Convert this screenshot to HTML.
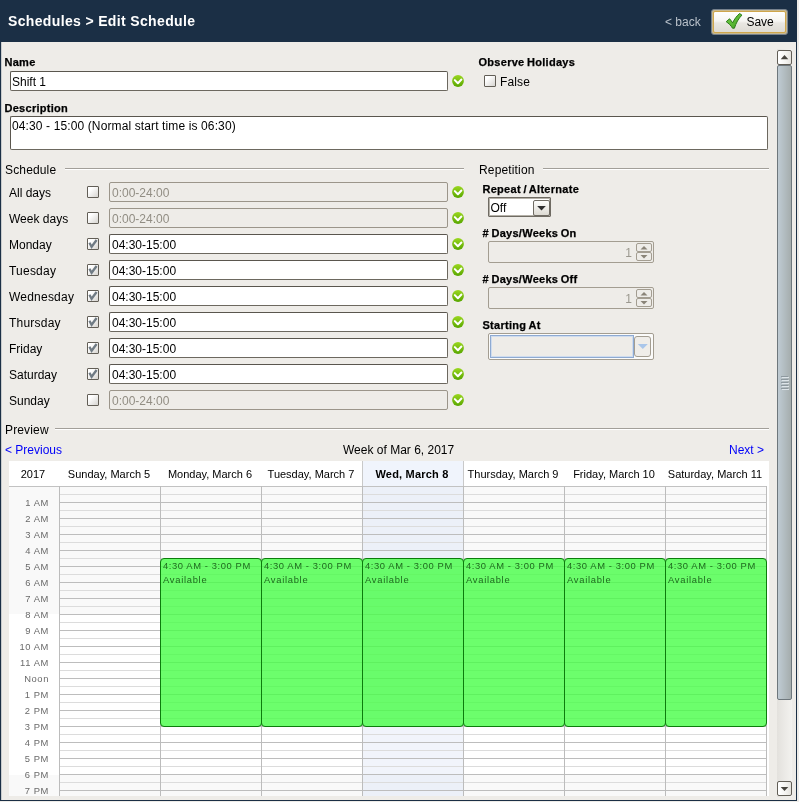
<!DOCTYPE html>
<html>
<head>
<meta charset="utf-8">
<title>Edit Schedule</title>
<style>
*{box-sizing:border-box;margin:0;padding:0}
body{will-change:transform}
html,body{width:799px;height:802px;overflow:hidden;background:#eeece8;font-family:"Liberation Sans",sans-serif;font-size:12px;color:#000}
.a{position:absolute;white-space:nowrap}
#hdr{left:0;top:0;width:797px;height:42px;background:#1b2f45}
#title{left:8px;top:13px;font-size:14px;font-weight:bold;color:#fff;letter-spacing:.35px;line-height:16px}
#back{left:665px;top:15px;color:#b9c1ca;font-size:12px;line-height:14px;letter-spacing:0}
#save{left:711px;top:9px;width:77px;height:26px;border:1px solid #76818d;border-radius:3px;background:#c9b98e;padding:1px}
#save .in{width:100%;height:100%;border-radius:2px;background:linear-gradient(#ffffff 0%,#f6f5f2 45%,#e9e7e2 55%,#dedbd4 100%);border:1px solid #cfa64c}
#save .tx{left:34.5px;top:5px;font-size:12px;line-height:14px;color:#000;letter-spacing:-.1px}
#frameL{left:0;top:42px;width:2px;height:759px;background:linear-gradient(to right,#1b2f45 0,#1b2f45 1px,#c9cccd 1px,#c9cccd 2px)}
#frameB{left:0;top:800px;width:797px;height:1px;background:#1b2f45}
#frameR{left:796px;top:42px;width:1px;height:759px;background:#1b2f45}
.lb{font-weight:bold;font-size:11px;line-height:13px;letter-spacing:.28px;word-spacing:-.8px;margin-left:-.5px;-webkit-text-stroke:.25px #000}
.tx{font-size:12px;line-height:14px}
.inp{background:#fff;border:1px solid #6c685f;border-top-color:#5a564e;border-left-color:#5a564e;border-radius:2px;font-size:12px;line-height:14px;padding:3px 1px}
.inp.dis{background:#eeece8;border-color:#9b958a;color:#918d83}
.cb{width:12px;height:12px;border:1px solid #625e56;background:linear-gradient(135deg,#ffffff 25%,#d6d4d0 100%);border-radius:1px}
.sep{height:2px;background:linear-gradient(#a29f99 0,#a29f99 1px,#fff 1px,#fff 2px)}
.ok{width:12px;height:12px}

#combo{background:#fff;border:1px solid #6f6b63;box-shadow:inset 0 0 0 1px #b5b1a8;border-radius:1px}
#combo .btn{border:1px solid #6f6b63;border-radius:2px;background:linear-gradient(#fdfdfc,#dddad3)}
.spin{border:1px solid #a39d91;border-radius:2px;background:#eeece8}
.spin .sb{width:16px;height:9px;border:1px solid #a39d91;border-radius:2px;background:#eeece8}
#start{border:1px solid #a39d91;border-radius:2px;background:#fbfbfa}
#start .fld{left:1px;top:1px;width:144px;height:23px;border:1px solid #8eaad2;box-shadow:inset 0 0 0 1px #cfdcee;background:#eeece8}
#start .dbtn{left:145px;top:2px;width:17px;height:21px;border:1px solid #a39d91;border-radius:3px;background:#efede9}

#hl{background:repeating-linear-gradient(to bottom,#bdbdbd 0,#bdbdbd 1px,transparent 1px,transparent 8px,#dcdcdc 8px,#dcdcdc 9px,transparent 9px,transparent 16px)}
.hd{top:0;height:25px;line-height:26px;text-align:center;font-size:11px;color:#000;padding-right:1px}
.hr{left:0;width:40px;text-align:right;font-size:9.4px;line-height:12px;letter-spacing:.6px;color:#6a6a6a}
.ev{background:rgba(71,254,71,.8);border:1px solid #0c7c0c;border-radius:4px;font-size:9.4px;line-height:11px;letter-spacing:.6px;color:#1f6a1f}

#trk{background:linear-gradient(to right,#e3e1dd,#f3f2ef)}
.sbtn{width:15px;height:15px;border:1px solid #625e56;border-radius:2px;background:linear-gradient(to right,#ffffff 10%,#f4f3f0 60%,#e5e3de)}
#thumb{background:linear-gradient(to right,#bfcbd3,#a5adad);border:1px solid #6e777c;border-radius:2px}
#grip{background:repeating-linear-gradient(to bottom,#8e999e 0,#8e999e 1px,transparent 1px,transparent 2px)}
</style>
</head>
<body>
<svg width="0" height="0" style="position:absolute"><defs>
<linearGradient id="okg" x1="0" y1="0" x2="0" y2="1"><stop offset="0" stop-color="#9ad71f"/><stop offset="1" stop-color="#58a600"/></linearGradient>
<symbol id="ok" viewBox="0 0 12 12"><circle cx="6" cy="6" r="5.9" fill="url(#okg)"/><path d="M2.8 5.1 L5.9 8.2 L9.4 4.5" fill="none" stroke="#fff" stroke-width="2" stroke-linecap="round" stroke-linejoin="round"/></symbol>
</defs></svg>
<div id="hdr" class="a"></div>
<div id="title" class="a">Schedules &gt; Edit Schedule</div>
<div id="back" class="a">&lt; back</div>
<div id="save" class="a"><div class="in"></div>
<svg class="a" style="left:13px;top:3px" width="19" height="17" viewBox="0 0 19 17"><defs><linearGradient id="ckg" x1="0" y1="0" x2="1" y2="1"><stop offset="0" stop-color="#7ad24e"/><stop offset="1" stop-color="#3fa21f"/></linearGradient></defs><path d="M1.2 8.7 L4.6 5.8 L7.7 9.8 C9.4 6 12 2.6 14.6 0.5 L16.9 2.1 C13.5 5.6 11 10 9.4 15.2 L7.5 15.2 C6 12.5 3.6 10.3 1.2 8.7 Z" fill="url(#ckg)" stroke="#2b7a1a" stroke-width="1" stroke-linejoin="round"/></svg>
<div class="a tx">Save</div></div>
<div id="frameL" class="a"></div><div id="frameB" class="a"></div><div id="frameR" class="a"></div>

<div class="a lb" style="left:5px;top:56px">Name</div>
<div class="a inp" style="left:10px;top:71px;width:438px;height:20px">Shift 1</div>
<svg class="a ok" style="left:452px;top:75px"><use href="#ok"/></svg>
<div class="a lb" style="left:479px;top:56px">Observe Holidays</div>
<div class="a cb" style="left:484px;top:75px"></div>
<div class="a tx" style="left:500px;top:75px;letter-spacing:.15px">False</div>
<div class="a lb" style="left:5px;top:102px">Description</div>
<div class="a inp" style="left:10px;top:116px;width:758px;height:34px;letter-spacing:.12px;padding-top:2px">04:30 - 15:00 (Normal start time is 06:30)</div>
<div class="a tx" style="left:5px;top:163px;letter-spacing:.15px">Schedule</div>
<div class="a sep" style="left:65px;top:168px;width:399px"></div>
<div class="a tx" style="left:479px;top:163px;letter-spacing:.15px">Repetition</div>
<div class="a sep" style="left:543px;top:168px;width:226px"></div>
<div class="a tx" style="left:9px;top:186px">All days</div>
<div class="a cb" style="left:87px;top:186px"></div>
<div class="a inp dis" style="left:109px;top:182px;width:339px;height:20px;padding-left:2px">0:00-24:00</div>
<svg class="a ok" style="left:452px;top:186px"><use href="#ok"/></svg>
<div class="a tx" style="left:9px;top:212px">Week days</div>
<div class="a cb" style="left:87px;top:212px"></div>
<div class="a inp dis" style="left:109px;top:208px;width:339px;height:20px;padding-left:2px">0:00-24:00</div>
<svg class="a ok" style="left:452px;top:212px"><use href="#ok"/></svg>
<div class="a tx" style="left:9px;top:238px">Monday</div>
<div class="a cb" style="left:87px;top:238px"><svg width="10" height="10" viewBox="0 0 10 10" style="display:block"><path d="M1.4 3.8 L3.6 7.8 L8.6 1" fill="none" stroke="#707b84" stroke-width="2.3"/></svg></div>
<div class="a inp" style="left:109px;top:234px;width:339px;height:20px;padding-left:2px">04:30-15:00</div>
<svg class="a ok" style="left:452px;top:238px"><use href="#ok"/></svg>
<div class="a tx" style="left:9px;top:264px;letter-spacing:.22px">Tuesday</div>
<div class="a cb" style="left:87px;top:264px"><svg width="10" height="10" viewBox="0 0 10 10" style="display:block"><path d="M1.4 3.8 L3.6 7.8 L8.6 1" fill="none" stroke="#707b84" stroke-width="2.3"/></svg></div>
<div class="a inp" style="left:109px;top:260px;width:339px;height:20px;padding-left:2px">04:30-15:00</div>
<svg class="a ok" style="left:452px;top:264px"><use href="#ok"/></svg>
<div class="a tx" style="left:9px;top:290px;letter-spacing:.22px">Wednesday</div>
<div class="a cb" style="left:87px;top:290px"><svg width="10" height="10" viewBox="0 0 10 10" style="display:block"><path d="M1.4 3.8 L3.6 7.8 L8.6 1" fill="none" stroke="#707b84" stroke-width="2.3"/></svg></div>
<div class="a inp" style="left:109px;top:286px;width:339px;height:20px;padding-left:2px">04:30-15:00</div>
<svg class="a ok" style="left:452px;top:290px"><use href="#ok"/></svg>
<div class="a tx" style="left:9px;top:316px;letter-spacing:.22px">Thursday</div>
<div class="a cb" style="left:87px;top:316px"><svg width="10" height="10" viewBox="0 0 10 10" style="display:block"><path d="M1.4 3.8 L3.6 7.8 L8.6 1" fill="none" stroke="#707b84" stroke-width="2.3"/></svg></div>
<div class="a inp" style="left:109px;top:312px;width:339px;height:20px;padding-left:2px">04:30-15:00</div>
<svg class="a ok" style="left:452px;top:316px"><use href="#ok"/></svg>
<div class="a tx" style="left:9px;top:342px">Friday</div>
<div class="a cb" style="left:87px;top:342px"><svg width="10" height="10" viewBox="0 0 10 10" style="display:block"><path d="M1.4 3.8 L3.6 7.8 L8.6 1" fill="none" stroke="#707b84" stroke-width="2.3"/></svg></div>
<div class="a inp" style="left:109px;top:338px;width:339px;height:20px;padding-left:2px">04:30-15:00</div>
<svg class="a ok" style="left:452px;top:342px"><use href="#ok"/></svg>
<div class="a tx" style="left:9px;top:368px">Saturday</div>
<div class="a cb" style="left:87px;top:368px"><svg width="10" height="10" viewBox="0 0 10 10" style="display:block"><path d="M1.4 3.8 L3.6 7.8 L8.6 1" fill="none" stroke="#707b84" stroke-width="2.3"/></svg></div>
<div class="a inp" style="left:109px;top:364px;width:339px;height:20px;padding-left:2px">04:30-15:00</div>
<svg class="a ok" style="left:452px;top:368px"><use href="#ok"/></svg>
<div class="a tx" style="left:9px;top:394px">Sunday</div>
<div class="a cb" style="left:87px;top:394px"></div>
<div class="a inp dis" style="left:109px;top:390px;width:339px;height:20px;padding-left:2px">0:00-24:00</div>
<svg class="a ok" style="left:452px;top:394px"><use href="#ok"/></svg>
<div class="a lb" style="left:483px;top:183px;">Repeat / Alternate</div>
<div class="a" id="combo" style="left:488px;top:197px;width:63px;height:20px"><div class="a tx" style="left:1.5px;top:3px">Off</div><div class="a btn" style="left:44px;top:2px;width:17px;height:16px"><svg width="15" height="14" style="display:block"><path d="M3.2 5 L11.8 5 L7.5 9.5 Z" fill="#2e2e2e"/></svg></div></div>
<div class="a lb" style="left:483px;top:227px;"># Days/Weeks On</div>
<div class="a lb" style="left:483px;top:273px;"># Days/Weeks Off</div>
<div class="a spin" style="left:488px;top:241px;width:166px;height:22px"><div class="a tx" style="right:21px;top:4px;color:#9b988f">1</div><div class="a sb" style="left:147px;top:1px"><svg width="14" height="7" style="display:block"><path d="M3.5 5.5 L10.5 5.5 L7 2 Z" fill="#8a8478"/></svg></div><div class="a sb" style="left:147px;top:10px"><svg width="14" height="7" style="display:block"><path d="M3.5 2 L10.5 2 L7 5.5 Z" fill="#8a8478"/></svg></div></div>
<div class="a spin" style="left:488px;top:287px;width:166px;height:22px"><div class="a tx" style="right:21px;top:4px;color:#9b988f">1</div><div class="a sb" style="left:147px;top:1px"><svg width="14" height="7" style="display:block"><path d="M3.5 5.5 L10.5 5.5 L7 2 Z" fill="#8a8478"/></svg></div><div class="a sb" style="left:147px;top:10px"><svg width="14" height="7" style="display:block"><path d="M3.5 2 L10.5 2 L7 5.5 Z" fill="#8a8478"/></svg></div></div>
<div class="a lb" style="left:483px;top:319px;">Starting At</div>
<div class="a" id="start" style="left:488px;top:333px;width:166px;height:27px"><div class="a fld"></div><div class="a dbtn"><svg width="14" height="18" style="display:block"><path d="M2.8 7 L12.8 7 L7.8 12 Z" fill="#a9c6ea"/></svg></div></div>
<div class="a tx" style="left:5px;top:423px;letter-spacing:.15px">Preview</div>
<div class="a sep" style="left:55px;top:428px;width:714px"></div>
<div class="a tx" style="left:5px;top:443px;color:#0000f8">&lt; Previous</div>
<div class="a tx" style="left:343px;top:443px">Week of Mar 6, 2017</div>
<div class="a tx" style="left:729px;top:443px;color:#0000f8">Next &gt;</div>
<div class="a" id="cal" style="left:9px;top:461px;width:760px;height:335px;background:#fff;overflow:hidden">
<div class="a" style="left:0;top:25px;width:758px;height:128px;background:#f9f9f9"></div>
<div class="a" style="left:0;top:314px;width:758px;height:23px;background:#f9f9f9"></div>
<div class="a" style="left:353px;top:0;width:102px;height:25px;background:#f0f4fc;border-left:1px solid #c9c9c9;border-right:1px solid #c9c9c9"></div>
<div class="a" style="left:354px;top:25px;width:100px;height:311px;background:#f1f4fb"></div>
<div class="a" style="left:354px;top:25px;width:100px;height:128px;background:#ecf0f8"></div>
<div class="a" style="left:354px;top:314px;width:100px;height:23px;background:#ecf0f8"></div>
<div class="a" id="hl" style="left:50px;top:25px;width:708px;height:311px"></div>
<div class="a" style="left:0;top:25px;width:758px;height:1px;background:#c2c2c2"></div>
<div class="a" style="left:50px;top:25px;width:1px;height:311px;background:#bcbcbc"></div>
<div class="a" style="left:151px;top:25px;width:1px;height:311px;background:#bcbcbc"></div>
<div class="a" style="left:252px;top:25px;width:1px;height:311px;background:#bcbcbc"></div>
<div class="a" style="left:353px;top:25px;width:1px;height:311px;background:#bcbcbc"></div>
<div class="a" style="left:454px;top:25px;width:1px;height:311px;background:#bcbcbc"></div>
<div class="a" style="left:555px;top:25px;width:1px;height:311px;background:#bcbcbc"></div>
<div class="a" style="left:656px;top:25px;width:1px;height:311px;background:#bcbcbc"></div>
<div class="a" style="left:757px;top:25px;width:1px;height:311px;background:#bcbcbc"></div>
<div class="a hd" style="left:-1px;width:51px">2017</div>
<div class="a hd" style="left:50px;width:101px">Sunday, March 5</div>
<div class="a hd" style="left:151px;width:101px">Monday, March 6</div>
<div class="a hd" style="left:252px;width:101px">Tuesday, March 7</div>
<div class="a hd" style="left:353px;width:101px;font-weight:bold;letter-spacing:.2px">Wed, March 8</div>
<div class="a hd" style="left:454px;width:101px">Thursday, March 9</div>
<div class="a hd" style="left:555px;width:101px">Friday, March 10</div>
<div class="a hd" style="left:656px;width:101px">Saturday, March 11</div>
<div class="a hr" style="top:36px">1 AM</div>
<div class="a hr" style="top:52px">2 AM</div>
<div class="a hr" style="top:68px">3 AM</div>
<div class="a hr" style="top:84px">4 AM</div>
<div class="a hr" style="top:100px">5 AM</div>
<div class="a hr" style="top:116px">6 AM</div>
<div class="a hr" style="top:132px">7 AM</div>
<div class="a hr" style="top:148px">8 AM</div>
<div class="a hr" style="top:164px">9 AM</div>
<div class="a hr" style="top:180px">10 AM</div>
<div class="a hr" style="top:196px">11 AM</div>
<div class="a hr" style="top:212px">Noon</div>
<div class="a hr" style="top:228px">1 PM</div>
<div class="a hr" style="top:244px">2 PM</div>
<div class="a hr" style="top:260px">3 PM</div>
<div class="a hr" style="top:276px">4 PM</div>
<div class="a hr" style="top:292px">5 PM</div>
<div class="a hr" style="top:308px">6 PM</div>
<div class="a hr" style="top:324px">7 PM</div>
<div class="a ev" style="left:151px;top:97px;width:102px;height:169px"><div class="a" style="left:2px;top:1px">4:30 AM - 3:00 PM</div><div class="a" style="left:2px;top:14.5px;letter-spacing:.72px">Available</div></div>
<div class="a ev" style="left:252px;top:97px;width:102px;height:169px"><div class="a" style="left:2px;top:1px">4:30 AM - 3:00 PM</div><div class="a" style="left:2px;top:14.5px;letter-spacing:.72px">Available</div></div>
<div class="a ev" style="left:353px;top:97px;width:102px;height:169px"><div class="a" style="left:2px;top:1px">4:30 AM - 3:00 PM</div><div class="a" style="left:2px;top:14.5px;letter-spacing:.72px">Available</div></div>
<div class="a ev" style="left:454px;top:97px;width:102px;height:169px"><div class="a" style="left:2px;top:1px">4:30 AM - 3:00 PM</div><div class="a" style="left:2px;top:14.5px;letter-spacing:.72px">Available</div></div>
<div class="a ev" style="left:555px;top:97px;width:102px;height:169px"><div class="a" style="left:2px;top:1px">4:30 AM - 3:00 PM</div><div class="a" style="left:2px;top:14.5px;letter-spacing:.72px">Available</div></div>
<div class="a ev" style="left:656px;top:97px;width:102px;height:169px"><div class="a" style="left:2px;top:1px">4:30 AM - 3:00 PM</div><div class="a" style="left:2px;top:14.5px;letter-spacing:.72px">Available</div></div>
</div>
<div class="a" id="trk" style="left:777px;top:49px;width:15px;height:748px"></div>
<div class="a sbtn" style="left:777px;top:50px"><svg width="13" height="12" style="display:block"><path d="M2.7 8.2 L10.3 8.2 L6.5 4 Z" fill="#47443e"/></svg></div>
<div class="a" id="thumb" style="left:777px;top:65px;width:15px;height:635px"></div>
<svg class="a" style="left:781px;top:376px" width="8" height="14"><rect x="0" y="0" width="7" height="1" fill="#8e999f"/><rect x="1" y="1" width="7" height="1" fill="#dde4e8"/><rect x="0" y="3" width="7" height="1" fill="#8e999f"/><rect x="1" y="4" width="7" height="1" fill="#dde4e8"/><rect x="0" y="6" width="7" height="1" fill="#8e999f"/><rect x="1" y="7" width="7" height="1" fill="#dde4e8"/><rect x="0" y="9" width="7" height="1" fill="#8e999f"/><rect x="1" y="10" width="7" height="1" fill="#dde4e8"/><rect x="0" y="12" width="7" height="1" fill="#8e999f"/><rect x="1" y="13" width="7" height="1" fill="#dde4e8"/></svg>
<div class="a sbtn" style="left:777px;top:781px"><svg width="13" height="12" style="display:block"><path d="M2.7 4.9 L10.3 4.9 L6.5 9.1 Z" fill="#47443e"/></svg></div>
</body>
</html>
